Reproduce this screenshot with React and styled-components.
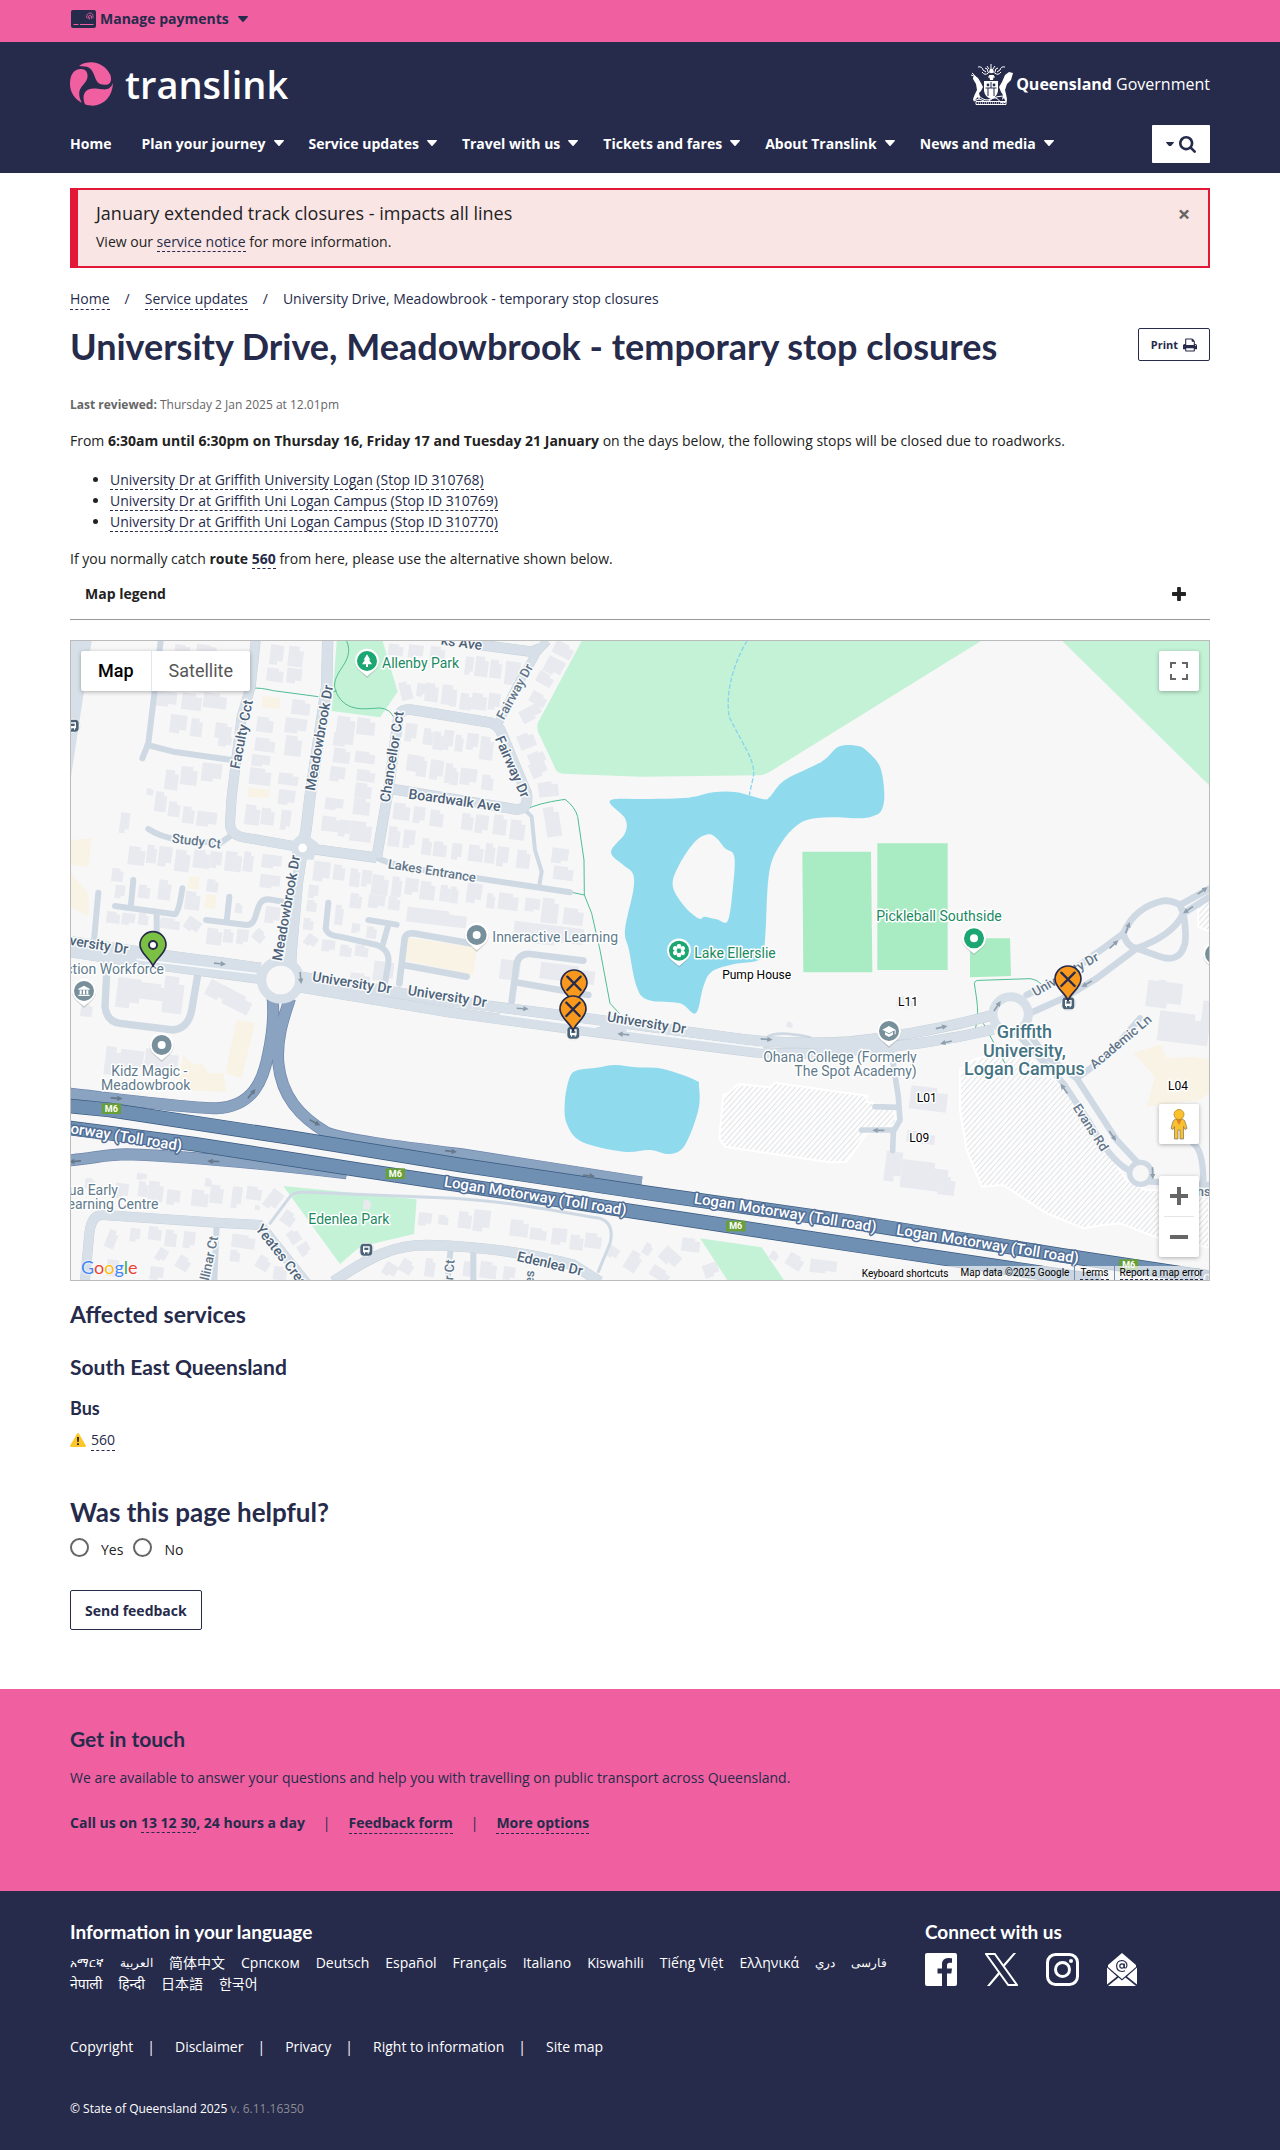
import React from "react";
import styled, { createGlobalStyle, css } from "styled-components";
import { FaXTwitter } from "react-icons/fa6";

const NAVY = "#262b4b";
const PINK = "#f060a1";

const GlobalStyle = createGlobalStyle`
  * { box-sizing: border-box; }
  body {
    margin: 0;
    background: #fff;
    color: #222;
    font-family: "Open Sans", "Noto Sans", "Noto Sans CJK SC", "Noto Sans CJK JP", "Noto Sans CJK KR", sans-serif;
    font-size: 14px;
    line-height: 21px;
  }
  h1, h2, h3, h4, p, ul { margin: 0; }
  button { font-family: inherit; cursor: pointer; }
`;

/* ---------- shared ---------- */

const Container = styled.div`
  width: 100%;
  max-width: 1180px;
  margin: 0 auto;
  padding: 0 20px;
`;

const Link = styled.a`
  color: ${NAVY};
  text-decoration: none;
  border-bottom: 1px dashed ${NAVY};
`;

const Heading = styled.h2`
  color: ${(p) => p.$color || NAVY};
  font-family: Lato, "Open Sans", sans-serif;
  font-weight: 700;
  font-size: ${(p) => p.$size}px;
  line-height: ${(p) => p.$line}px;
  margin-top: ${(p) => p.$top || 0}px;
`;

const Glyph = styled.svg`
  display: block;
  fill: currentColor;
  flex: none;
`;

const Caret = ({ size = 10 }) => (
  <Glyph width={size} height={size * 0.6} viewBox="0 0 10 6" aria-hidden="true">
    <path d="M.6 0h8.8q.9.2.4.9L5.6 5.7q-.6.5-1.2 0L.2.9Q-.2.2.6 0z" />
  </Glyph>
);

/* ---------- header ---------- */

const TopBar = styled.div`
  background: ${PINK};
`;

const TopBarButton = styled.button`
  display: flex;
  align-items: center;
  height: 42px;
  padding: 0 0 4px 1px;
  gap: 4px;
  border: 0;
  background: none;
  color: ${NAVY};
  font-size: 14px;
  font-weight: 700;
  line-height: 20px;
`;

const TopBarLabel = styled.span`
  margin-right: 5px;
`;

const Header = styled.header`
  background: ${NAVY};
  color: #fff;
  padding: 20px 0 10px;
`;

const BrandRow = styled.div`
  display: flex;
  justify-content: space-between;
  align-items: center;
  height: 44px;
`;

const Brand = styled.a`
  display: flex;
  align-items: center;
  gap: 12px;
  color: #fff;
  text-decoration: none;
`;

const BrandName = styled.span`
  font-family: "Open Sans", sans-serif;
  font-weight: 600;
  font-size: 38px;
  line-height: 44px;
`;

const Government = styled.a`
  display: flex;
  align-items: center;
  gap: 3px;
  color: #fff;
  text-decoration: none;
  font-family: "Open Sans", sans-serif;
  font-size: 16px;
  font-weight: 400;
  line-height: 24px;
  strong { font-weight: 700; }
`;

const NavRow = styled.div`
  display: flex;
  justify-content: space-between;
  align-items: center;
  margin-top: 19px;
`;

const Nav = styled.nav`
  display: flex;
  flex-wrap: wrap;
  column-gap: 25px;
  padding-bottom: 2px;
`;

const NavLink = styled.a`
  display: flex;
  align-items: center;
  gap: 8px;
  color: #fff;
  text-decoration: none;
  font-size: 14px;
  font-weight: 700;
  ${(p) => p.$plain && css`margin-right: 5px;`}
`;

const SearchButton = styled.button`
  display: flex;
  align-items: center;
  justify-content: center;
  gap: 5px;
  width: 58px;
  height: 38px;
  padding: 0;
  border: 0;
  border-radius: 1px;
  background: #fff;
  color: ${NAVY};
`;

const PaymentCard = () => (
  <Glyph width="25" height="18" viewBox="0 0 25 18" aria-hidden="true">
    <rect width="25" height="18" rx="2" fill={NAVY} />
    <path d="M2.500 14.500h5M9 14.500h13.500" stroke={PINK} strokeWidth="1" />
    <g fill="none" stroke={PINK} strokeWidth=".8">
      <path d="M15.500 8q0-5 3.500-5t3 5M17 9q0-4 2-4t1.800 4M18.500 9.500q0-3 .8-3" />
    </g>
  </Glyph>
);

const BrandMark = () => (
  <Glyph width="43" height="44" viewBox="0 0 43 44" aria-hidden="true">
    <g fill={PINK}>
      <path d="M9 4C13 1 17 .3 21 .3c9 0 16 5.500 19.500 13 1.200 4 .8 9.500-4.500 9.500-5.500 0-8-1-10-5C23.500 12 22.500 5 15 4.500c-2-.2-4-.3-6-.5z" />
      <path d="M10 7c5-.5 8 2.500 7.500 8C17 21 10 24 9.300 30c-.4 4 .6 7.500 2.600 10.800C4.500 37 0 30 0 22 0 14 3 7.500 10 7z" />
      <path d="M43 21c-2 5.500-6 7-11 6.300-5-.6-9-1.500-13 0-4.500 1.700-5.800 6-5.300 10 .2 2 .6 3.500 1.300 5 2.500 1 5 1.400 8 1.400C35 43 42.500 33.500 43 21z" />
    </g>
  </Glyph>
);

const CoatOfArms = () => (
  <Glyph width="43" height="42" viewBox="0 0 43 42" aria-hidden="true">
    <g fill="none" stroke="#fff" strokeWidth="1">
      <path d="M8 4q4-1 5 3l3 2M35 4q-4-1-5 3l-3 2M21 1v6M17 3l2 3M25 3l-2 3M12 9q3 4 6 1M31 9q-3 4-6 1M15 5q3 0 3 4M28 5q-3 0-3 4" />
      <path d="M17 11q4-5 9 0M18 14h7M5 37.500q4-3 8 0t8-1 8 1 8 0M9 33q6 6 12 3t12-3M6 38.500h30v3H6z" />
      <path d="M8 40h26" strokeDasharray="1 1" />
      <path d="M2 10q3 2 4 5M1 12l3 1M3 15l2-1" />
    </g>
    <path d="M14 18h14v10q-1 6-7 8-6-2-7-8z" />
    <path d="M15.500 25h11M21 19v6M18 25v8M24 25v8" stroke={NAVY} />
    <circle cx="18" cy="22" r="1.400" fill={NAVY} />
    <circle cx="24" cy="22" r="1.400" fill={NAVY} />
    <circle cx="21.500" cy="8" r="2.200" />
    <path d="M19 12h5l-1 5h-3z" />
    <path d="M4 12l4 3 3 5 2 4-2 4-2 2 1 4-1 3-1-3-2 2-2 3-1-3 2-5 2-4-1-6-3-5z" />
    <path d="M43 10l-4-1-4 3-3 7-3 5 2 5 2 3-1 5 2-2 2 5 1-4-1-5-1-4 2-6 4-4z" />
  </Glyph>
);

const SearchIcon = () => (
  <Glyph width="17" height="17" viewBox="64 128 1664 1664" aria-hidden="true">
    <path d="M1216 832q0-185-131.500-316.500t-316.500-131.500-316.500 131.500-131.500 316.500 131.500 316.500 316.500 131.500 316.500-131.500 131.500-316.500zm512 832q0 52-38 90t-90 38q-54 0-90-38l-343-342q-179 124-399 124-143 0-273.500-55.500t-225-150-150-225-55.500-273.500 55.500-273.500 150-225 225-150 273.500-55.500 273.500 55.500 225 150 150 225 55.500 273.500q0 220-124 399l343 343q37 37 37 90z" />
  </Glyph>
);

const MENU = ["Plan your journey", "Service updates", "Travel with us", "Tickets and fares", "About Translink", "News and media"];

const SiteHeader = () => (
  <>
    <TopBar>
      <Container>
        <TopBarButton type="button">
          <PaymentCard />
          <TopBarLabel>Manage payments</TopBarLabel>
          <Caret />
        </TopBarButton>
      </Container>
    </TopBar>
    <Header>
      <Container>
        <BrandRow>
          <Brand href="#home"><BrandMark /><BrandName>translink</BrandName></Brand>
          <Government href="#government">
            <CoatOfArms />
            <span><strong>Queensland</strong> Government</span>
          </Government>
        </BrandRow>
        <NavRow>
          <Nav aria-label="Main">
            <NavLink href="#home" $plain>Home</NavLink>
            {MENU.map((item) => (
              <NavLink href="#menu" key={item}>{item}<Caret /></NavLink>
            ))}
          </Nav>
          <SearchButton type="button" aria-label="Search"><Caret size={8} /><SearchIcon /></SearchButton>
        </NavRow>
      </Container>
    </Header>
  </>
);

/* ---------- page content ---------- */

const Alert = styled.section`
  display: flex;
  justify-content: space-between;
  align-items: flex-start;
  margin-top: 15px;
  padding: 11px 12px 14px 18px;
  border: 2px solid #e31837;
  border-left-width: 8px;
  background: #f9e5e4;
`;

const AlertTitle = styled.h2`
  font-size: 18px;
  font-weight: 400;
  line-height: 24px;
  margin-bottom: 6px;
`;

const CloseButton = styled.button`
  width: 24px;
  height: 24px;
  padding: 0;
  border: 0;
  background: none;
  color: #666;
  font-size: 22px;
  font-weight: 700;
  line-height: 24px;
`;

const Crumbs = styled.nav`
  display: flex;
  flex-wrap: wrap;
  column-gap: 15px;
  margin-top: 20px;
  color: ${NAVY};
`;

const TitleRow = styled.div`
  display: flex;
  justify-content: space-between;
  align-items: flex-start;
  margin-top: 15px;
`;

const OutlineButton = styled.button`
  display: flex;
  align-items: center;
  justify-content: center;
  gap: 5px;
  border: 1px solid ${NAVY};
  border-radius: 2px;
  background: #fff;
  color: ${NAVY};
  font-weight: 700;
  ${(p) => p.$small
    ? css`height: 33px; padding: 0 12px; margin-top: 3px; font-size: 11px;`
    : css`height: 40px; padding: 0 14px; margin-top: 29px; font-size: 14px;`}
`;

const Reviewed = styled.p`
  margin-top: 28px;
  color: #666;
  font-size: 12px;
  line-height: 18px;
`;

const Paragraph = styled.p`
  margin-top: 16px;
`;

const StopList = styled.ul`
  margin-top: 18px;
  padding-left: 40px;
`;

const Legend = styled.button`
  display: flex;
  justify-content: space-between;
  align-items: center;
  width: 100%;
  padding: 14px 24px 15px 15px;
  border: 0;
  border-bottom: 1px solid #999;
  background: none;
  color: #222;
  font-size: 14px;
  font-weight: 700;
  line-height: 21px;
`;

const PrintIcon = () => (
  <Glyph width="14" height="14" viewBox="64 64 1664 1664" aria-hidden="true">
    <path d="M448 1536h896v-256h-896v256zm0-640h896v-384h-160q-40 0-68-28t-28-68v-160h-640v640zm1152 64q0-26-19-45t-45-19-45 19-19 45 19 45 45 19 45-19 19-45zm128 0v416q0 13-9.500 22.500t-22.500 9.500h-224v160q0 40-28 68t-68 28h-960q-40 0-68-28t-28-68v-160h-224q-13 0-22.500-9.500t-9.500-22.500v-416q0-79 56.500-135.500t135.500-56.500h64v-544q0-40 28-68t68-28h672q40 0 88 20t76 48l152 152q28 28 48 76t20 88v256h64q79 0 135.500 56.500t56.500 135.500z" />
  </Glyph>
);

const PlusIcon = () => (
  <Glyph width="14" height="14" viewBox="192 128 1408 1408" aria-hidden="true">
    <path d="M1600 736v192q0 40-28 68t-68 28h-416v416q0 40-28 68t-68 28h-192q-40 0-68-28t-28-68v-416h-416q-40 0-68-28t-28-68v-192q0-40 28-68t68-28h416v-416q0-40 28-68t68-28h192q40 0 68 28t28 68v416h416q40 0 68 28t28 68z" />
  </Glyph>
);

/* ---------- map ---------- */

const MapFrame = styled.div`
  position: relative;
  height: 641px;
  margin-top: 20px;
  border: 1px solid #bbb;
  overflow: hidden;
  background: #f7f7f7;
  font-family: Roboto, sans-serif;
`;

const MapCanvas = styled.svg`
  display: block;
  width: 100%;
  height: 100%;
`;

const MapLabel = styled.text`
  font-family: Roboto, sans-serif;
  font-size: ${(p) => p.$size}px;
  font-weight: ${(p) => p.$weight};
  fill: ${(p) => p.$color};
  stroke: ${(p) => p.$halo};
  stroke-width: 3px;
  stroke-linejoin: round;
  paint-order: stroke;
  text-anchor: ${(p) => p.$anchor};
  dominant-baseline: central;
`;

const floating = css`
  position: absolute;
  display: flex;
  border-radius: 2px;
  background: #fff;
  box-shadow: 0 1px 4px rgba(0, 0, 0, 0.3);
`;

const MapTypes = styled.div`
  ${floating}
  top: 10px;
  left: 10px;
`;

const MapTypeButton = styled.button`
  height: 40px;
  padding: 0 17px 2px;
  border: 0;
  background: none;
  font-size: 18px;
  color: ${(p) => (p.$on ? "#000" : "#565656")};
  font-weight: ${(p) => (p.$on ? 500 : 400)};
  & + & { border-left: 1px solid #e6e6e6; }
`;

const TopRight = styled.div`
  ${floating}
  top: 10px;
  right: 10px;
`;

const PegmanBox = styled.div`
  ${floating}
  right: 10px;
  bottom: 136px;
`;

const ZoomBox = styled.div`
  ${floating}
  flex-direction: column;
  align-items: center;
  right: 10px;
  bottom: 23px;
`;

const ZoomDivider = styled.span`
  width: 30px;
  height: 1px;
  background: #e6e6e6;
`;

const MapButton = styled.button`
  display: flex;
  align-items: center;
  justify-content: center;
  width: 40px;
  height: 40px;
  padding: 0;
  border: 0;
  background: none;
  color: #666;
`;

const Attribution = styled.div`
  position: absolute;
  right: 0;
  bottom: 0;
  display: flex;
  height: 14px;
  padding: 0 6px;
  background: rgba(245, 245, 245, 0.7);
  color: #000;
  font-size: 10px;
  line-height: 13px;
`;

const AttributionItem = styled.span`
  padding: 0 5px;
  border-left: 1px solid ${(p) => (p.$line ? "#6f90b2" : "transparent")};
  &:last-child { padding-right: 0; }
  a {
    display: block;
    color: #000;
    text-decoration: none;
    border-bottom: 1px dashed ${NAVY};
  }
`;

const ShortcutButton = styled.button`
  padding: 0 6px;
  border: 0;
  background: none;
  color: #000;
  font-size: 10px;
  line-height: 13px;
`;

const GoogleMark = styled.a`
  position: absolute;
  left: 10px;
  bottom: 1px;
  font-family: Lato, sans-serif;
  font-size: 18px;
  line-height: 24px;
  text-decoration: none;
  text-shadow: 0 0 2px #fff, 0 0 2px #fff;
`;

const Letter = styled.span`
  color: ${(p) => p.$c};
`;

/* closed or open curve running through every point */
const curve = (pts, closed = true) => {
  const n = pts.length;
  const at = (i) => (closed ? pts[(i + n) % n] : pts[Math.max(0, Math.min(n - 1, i))]);
  let d = `M${pts[0]}`;
  for (let i = 0; i < (closed ? n : n - 1); i++) {
    const [a, b, c, e] = [at(i - 1), at(i), at(i + 1), at(i + 2)];
    d += `C${b[0] + (c[0] - a[0]) / 6},${b[1] + (c[1] - a[1]) / 6} ${c[0] - (e[0] - b[0]) / 6},${c[1] - (e[1] - b[1]) / 6} ${c}`;
  }
  return closed ? d + "Z" : d;
};

const LAKE = [[1650, 512], [1760, 507], [1885, 503], [1960, 487], [2030, 487], [2108, 507], [2130, 500], [2175, 450], [2285, 395], [2335, 350], [2390, 347], [2420, 362], [2460, 410], [2473, 490], [2465, 540], [2440, 558], [2400, 565], [2310, 562], [2240, 570], [2195, 600], [2160, 645], [2135, 695], [2123, 770], [2115, 930], [2100, 988], [2020, 1003], [1955, 1025], [1930, 1070], [1907, 1150], [1860, 1120], [1765, 1110], [1730, 1070], [1707, 960], [1695, 900], [1720, 780], [1718, 730], [1690, 705], [1653, 665], [1695, 610], [1695, 565]];
const ISLAND = [[1945, 613], [1970, 625], [1995, 655], [2023, 680], [2018, 780], [2003, 873], [1970, 868], [1935, 860], [1915, 865], [1870, 825], [1838, 765], [1860, 700], [1905, 635]];
const POND = [[1555, 1320], [1610, 1313], [1665, 1305], [1730, 1312], [1810, 1317], [1905, 1350], [1917, 1370], [1915, 1440], [1875, 1545], [1830, 1572], [1770, 1560], [1690, 1565], [1565, 1535], [1520, 1480], [1515, 1410], [1530, 1340]];

/* houses, grouped by map tile: x, y, width, height, turn */
const HOUSES = [
  [0, 0, [[630,45,40,60],[685,50,45,60],[620,115,50,40],[680,115,45,45],[345,45,45,20],[410,45,60,20],[290,185,60,45],[365,190,60,50],[430,190,70,45],[330,255,50,55],[392,265,35,55],[465,280,50,45],[475,320,40,30],[695,210,55,45],[590,262,50,45],[675,265,65,45],[585,325,60,40],[675,318,50,60],[575,375,55,35],[568,415,65,50],[655,430,60,35],[655,480,50,45],[555,525,45,60],[603,535,40,50],[662,540,30,60],[315,420,40,60],[362,410,50,55],[425,400,60,55],[260,475,20,20],[285,485,35,60],[180,548,28,62],[325,515,35,45],[368,530,35,50],[410,545,60,45],[205,650,50,55],[260,645,30,55],[295,650,40,60],[345,660,45,65],[400,660,50,55],[450,665,35,50],[495,665,50,60],[550,665,30,60],[605,675,60,40],[155,715,35,40],[235,765,35,40],[165,765,30,40],[295,750,38,60],[440,748,35,38],[600,735,60,40],[375,785,45,55],[140,845,40,35],[185,850,40,35],[235,850,30,35],[300,865,60,32],[375,865,45,40,28],[440,895,45,50],[490,898,30,40],[530,898,35,45],[580,900,35,35,35],[525,820,22,30],[615,830,45,50],[830,260,55,55],[890,265,55,50],[820,310,60,40],[820,355,50,45],[885,365,60,35],[810,410,45,45],[890,420,55,35],[885,460,50,45],[795,505,55,35],[785,560,60,45],[880,505,50,50],[835,570,35,50],[870,575,65,60],[985,42,45,35],[1045,45,45,40],[1110,50,45,45],[1020,155,35,55,-20],[1070,160,30,40],[1095,160,40,55],[1145,165,45,60],[1035,280,35,55],[1090,295,30,50],[1120,305,30,55],[1150,300,30,60],[1040,375,50,50],[1070,380,30,60],[1110,390,40,60],[1155,400,30,60],[1000,520,50,50],[1060,530,35,50],[1110,540,40,50],[985,590,35,60],[1030,600,35,55],[1085,625,30,50],[1120,635,40,45],[760,695,50,60],[820,705,35,45],[870,715,30,55],[905,720,30,50],[935,735,50,60],[995,740,30,60],[1035,745,40,50],[1080,755,45,55],[1140,765,30,50],[745,765,30,40],[740,810,30,35],[730,865,30,35],[735,915,35,35,30],[825,825,25,60],[870,790,35,45],[925,795,50,40],[985,800,35,40],[1040,840,180,45],[785,930,40,35],[840,945,35,35],[885,945,40,35],[875,880,25,30],[920,890,30,35]]],
  [1170, 0, [[45,80,25,55],[75,80,40,60],[120,90,35,55],[165,95,45,70],[30,190,35,50],[65,190,45,50],[115,190,35,50],[0,185,20,45],[310,40,60,40,20],[285,85,55,50,20],[260,130,50,35,22],[240,190,50,35,22],[210,230,65,40,-35],[205,310,50,45,-28],[235,365,50,35,-30],[240,395,50,45,-30],[265,455,60,45,-14],[285,530,45,90,-16],[305,655,50,45],[310,710,60,40],[15,315,25,50],[50,310,35,50],[90,320,40,70],[0,415,25,50],[30,415,50,50],[95,435,35,45],[35,550,35,50],[75,555,40,55],[130,555,40,60],[180,570,45,60],[5,640,30,50],[55,645,45,50],[105,640,30,60],[140,650,35,60],[200,660,40,55],[0,770,25,50],[50,760,45,60],[110,790,25,45],[145,790,60,50],[225,805,45,40],[275,805,50,75],[340,835,60,50],[190,885,210,60]]],
  [0, 960, [[170,85,70,90],[210,100,130,50],[310,80,60,110],[440,100,70,50,20],[490,130,85,50,20],[135,290,45,85],[180,300,70,60],[255,300,100,55],[62,160,35,40],[230,670,30,20],[435,685,20,25],[75,685,30,30],[165,700,40,45],[235,695,30,45],[265,695,45,60],[320,720,40,45],[395,720,50,50],[450,705,40,55],[515,710,30,65],[560,710,45,40],[585,765,15,15],[620,720,40,60,30],[665,785,40,40,30],[685,840,35,40,-40],[715,880,35,35,-40],[910,750,22,28],[140,840,30,55,15],[210,835,30,40],[265,830,40,40],[315,840,35,50],[370,845,35,50],[515,855,70,40],[510,900,30,35],[290,895,30,40,25],[350,920,40,40,25],[140,930,50,50],[270,950,40,40],[590,920,40,40,25],[640,950,40,40],[1075,788,40,40],[1135,795,30,30],[1095,925,30,55],[970,940,40,40,25],[1020,930,40,40,25],[870,70,60,35],[940,35,60,60]]],
  [1170, 960, [[150,30,60,60],[270,45,165,50],[25,785,40,50],[70,780,50,65],[180,810,55,50],[240,835,50,35],[305,835,45,50],[360,855,40,45],[405,850,50,45],[470,890,35,35,25],[530,905,40,60,25],[580,880,25,35,25],[630,900,60,45,35],[695,865,55,40],[600,955,60,35,25],[760,940,45,40,-26],[960,905,25,25,25],[1010,915,50,40,25],[1080,930,80,40],[40,935,35,45],[90,935,50,50],[160,950,35,40],[1010,215,18,18]]],
  [2310, 960, [[200,140,60,35],[240,412,112,70],[230,545,85,35],[165,605,50,90],[213,635,140,85],[325,680,50,55],[950,95,105,80],[985,90,30,40],[985,190,152,90],[1115,155,60,90]]],
];

/* curved residential streets: path, width */
const STREETS = [
  ["M587 33L572 170 545 260 515 500 510 580Q510 615 550 622L728 653", 28],
  ["M803 33L800 170 750 500 738 600 728 653 712 760 694 960 690 1040", 32],
  ["M728 653L950 683", 30],
  ["M950 683L985 480 1015 265Q1020 232 1060 240L1280 276Q1315 280 1325 310L1400 490Q1408 545 1360 537L1000 478", 30],
  ["M1315 280L1370 170 1420 85 1430 65 1462 33", 24],
  ["M1240 42L1415 65 1440 55", 30],
  ["M75 1950L88 1810Q95 1752 130 1755L470 1778 600 1785 740 1960", 28],
  ["M820 1955C930 1880 1000 1845 1100 1845C1300 1850 1450 1880 1540 1905L1620 1955", 30],
];

const LANES = [
  ["M302 33L265 340 247 385M262 345L340 365 515 390", 18],
  ["M265 597Q300 620 350 628L480 640 515 615", 18],
  ["M165 828L345 853Q357 845 367 775M212 835L220 750M290 855V915M115 788L102 930", 18],
  ["M438 870L560 885C600 885 580 805 625 808L670 815M500 875L508 800", 18],
  ["M805 818L797 895Q800 915 840 920L950 945Q990 960 985 1000L975 1060M925 870L1010 884M985 885L968 945", 18],
  ["M1018 1060L1034 925Q1038 908 1060 910L1230 940M1030 1005L1220 1040", 20],
  ["M1355 1115L1370 1000Q1378 970 1410 972L1570 992M1375 1058L1585 1095", 20],
  ["M950 683Q1000 710 1170 732L1530 787", 18],
  ["M1395 540L1415 560 1425 660 1445 725 1438 765", 12],
  ["M142 990L135 1130Q140 1175 180 1180L340 1200Q385 1195 395 1140L415 1025", 22],
  ["M470 1785L463 1950M1172 1855L1163 1950M1240 1870V1950", 18],
  ["M630 1780L690 1700Q700 1685 740 1687L1180 1705C1350 1715 1500 1745 1620 1765Q1665 1780 1650 1840L1615 1925", 9],
  ["M2120 1222Q2150 1200 2250 1222", 8],
  ["M2495 1270L2515 1400 2520 1470 2500 1505 2498 1562M2445 1430L2515 1432M2405 1500L2500 1500", 17],
  ["M2900 1095L3010 1040 3130 955 3190 910Q3225 830 3310 812Q3340 812 3360 825L3450 775M3190 910Q3200 950 3230 955Q3340 915 3370 850L3360 825M3370 850L3450 800M3370 850Q3380 900 3375 940Q3360 1000 3300 980L3230 955", 20],
  ["M2910 1150L3010 1105 3110 1045 3210 970 3230 955", 20],
  ["M2870 1210L3010 1360 3090 1480Q3150 1590 3205 1620M2905 1210L2960 1280 3050 1345 3170 1530 3235 1600M3050 1345L3140 1280 3240 1165M3270 1655L3450 1665M3400 1540Q3430 1560 3430 1660", 19],
];

const Arrow = ({ x, y, r = 0, c = "#8f9fae" }) => (
  <path d="M-18-2.500H2V-8L18 0 2 8V2.500H-18z" fill={c} transform={`translate(${x} ${y}) rotate(${r})`} />
);

const Pin = ({ x, y, color = "#78909c", kind }) => (
  <g transform={`translate(${x} ${y})`}>
    <path d="M0 48L-22 28A36 36 0 1 1 22 28z" fill="#888" opacity=".35" transform="translate(0 3)" />
    <path d="M0 46L-22 28A36 36 0 1 1 22 28z" fill="#fff" />
    <circle r="30" fill={color} />
    {kind === "dot" && <circle r="12" fill="#fff" />}
    {kind === "tree" && <path d="M0-20L10-4H6L15 10H3V18H-3V10H-15L-6-4H-10z" fill="#fff" />}
    {kind === "flower" && <g fill="#fff">{[0, 60, 120, 180, 240, 300].map((a) => <circle key={a} cx="0" cy="-13" r="7" transform={`rotate(${a})`} />)}</g>}
    {kind === "cap" && <path d="M0-15L20-4 0 7-20-4zM-12 3L0 10 12 3V11L0 18-12 11zM17-3h3v13h-3z" fill="#fff" />}
    {kind === "hall" && <path d="M0-16L17-7V-4H-17V-7zM-13-2h6v12h-6zM-3-2h6v12h-6zM7-2h6v12H7zM-17 11h34v4h-34z" fill="#fff" />}
  </g>
);

const BusStop = ({ x, y }) => (
  <g transform={`translate(${x} ${y})`}>
    <circle r="22" fill="#fff" stroke="#bcc4cc" />
    <rect x="-18" y="-18" width="36" height="36" rx="11" fill="#4a6378" />
    <path d="M-10-10H10V8H7v4H4V8H-4v4h-3V8h-3z" fill="#fff" />
    <path d="M-6-6H6V1H-6z" fill="#4a6378" />
  </g>
);

const Marker = ({ x, y, stop }) => (
  <g transform={`translate(${x} ${y})`} stroke={NAVY} strokeWidth="5" strokeLinejoin="round">
    <path d="M0 64C-6 42-39 26-39-1A39 39 0 0 1 39-1C39 26 6 42 0 64z" fill={stop ? "#f8981d" : "#7ac143"} />
    {stop
      ? <path d="M-20-20L20 20M20-20L-20 20" strokeWidth="7" strokeLinecap="round" />
      : <circle r="12" fill="#fff" strokeWidth="6" />}
  </g>
);

const Shield = ({ x, y }) => (
  <rect x={x - 29} y={y - 16} width="58" height="32" fill="#689f38" />
);

const SLATE = "#4d6279";
const POI = "#5f7b8c";
const GREEN = "#1b8a62";
/* text, x, y, turn, style */
const LABELS = [
  ["Faculty Cct", 544, 313, -79, "street"],
  ["Meadowbrook Dr", 777, 323, -80, "street"],
  ["Meadowbrook Dr", 678, 834, -80, "street"],
  ["Chancellor Cct", 995, 380, -81, "street"],
  ["Boardwalk Ave", 1184, 510, 8, "street"],
  ["Study Ct", 409, 633, 7, "lane"],
  ["Lakes Entrance", 1116, 722, 9, "lane"],
  ["Fairway Dr", 1364, 185, -61, "lane"],
  ["Fairway Dr", 1358, 410, 66, "street"],
  ["ks Ave", 1205, 37, 8, "street"],
  ["niversity Dr", 100, 941, 9, "street"],
  ["University Dr", 876, 1057, 9, "street"],
  ["University Dr", 1162, 1098, 9, "street"],
  ["University Dr", 1760, 1178, 9, "street"],
  ["University Dr", 3016, 1033, -30, "lane"],
  ["Academic Ln", 3182, 1235, -40, "lane"],
  ["Evans Rd", 3092, 1492, 57, "lane"],
  ["Edenlea Dr", 1470, 1900, 13, "street"],
  ["Yeates Cres", 666, 1876, 52, "street"],
  ["ellinar Ct", 445, 1895, -78, "lane"],
  ["ar Ct", 1167, 1930, -85, "lane"],
  ["es", 1408, 1942, -85, "lane"],
  ["Evans", 3400, 1684, 0, "lane"],
  ["Logan Motorway (Toll road)", 1426, 1698, 9, "motorway"],
  ["Logan Motorway (Toll road)", 2176, 1748, 9, "motorway"],
  ["Logan Motorway (Toll road)", 2783, 1842, 9, "motorway"],
  ["Motorway (Toll road)", 160, 1515, 9, "motorway"],
  ["Lo", 3430, 1938, 9, "motorway"],
  ["M6", 154, 1437, 0, "shield"],
  ["M6", 1006, 1632, 0, "shield"],
  ["M6", 2027, 1789, 0, "shield"],
  ["M6", 3206, 1905, 0, "shield"],
  ["Allenby Park", 966, 99, 0, "park"],
  ["Lake Ellerslie", 1903, 970, 0, "park"],
  ["Edenlea Park", 745, 1768, 0, "park"],
  ["Pickleball Southside", 2637, 859, 0, "park"],
  ["Inneractive Learning", 1297, 922, 0, "poi"],
  ["action Workforce", 312, 1017, 0, "poi", "end"],
  ["Kidz Magic -", 268, 1324, 0, "poi", "middle"],
  ["Meadowbrook", 257, 1366, 0, "poi", "middle"],
  ["qua Early", 174, 1681, 0, "poi", "end"],
  ["Learning Centre", 295, 1723, 0, "poi", "end"],
  ["Ohana College (Formerly", 2570, 1282, 0, "poi", "end"],
  ["The Spot Academy)", 2570, 1324, 0, "poi", "end"],
  ["Griffith", 2893, 1205, 0, "campus"],
  ["University,", 2893, 1260, 0, "campus"],
  ["Logan Campus", 2893, 1315, 0, "campus"],
  ["Pump House", 2090, 1036, 0, "block"],
  ["L11", 2544, 1116, 0, "block"],
  ["L01", 2600, 1404, 0, "block"],
  ["L09", 2578, 1524, 0, "block"],
  ["L04", 3354, 1368, 0, "block"],
];
const CENTRED_PARK = "Pickleball Southside";
const LABEL_STYLES = {
  street: { size: 14, weight: 500, color: SLATE, halo: "#f8fafb", anchor: "middle" },
  lane: { size: 13, weight: 500, color: "#627589", halo: "#f8fafb", anchor: "middle" },
  motorway: { size: 15, weight: 500, color: "#fff", halo: "#4f6d97", anchor: "middle" },
  shield: { size: 9, weight: 700, color: "#fff", halo: "none", anchor: "middle" },
  park: { size: 14, weight: 400, color: GREEN, halo: "#fff", anchor: "start" },
  poi: { size: 14, weight: 400, color: POI, halo: "#fff", anchor: "start" },
  campus: { size: 18, weight: 500, color: "#457484", halo: "#fff", anchor: "middle" },
  block: { size: 12, weight: 400, color: "#000", halo: "#fff", anchor: "middle" },
};

const DARK_NORTH = "M20 1427L150 1440 700 1524 1200 1605 1770 1690 2370 1775 3000 1875 3460 1945";
const DARK_SOUTH = "M20 1493L400 1542 900 1620 1200 1665 1770 1752 2370 1843 2900 1922 3120 1955";
const RAMPS = "M20 1390C200 1410 380 1435 470 1435C580 1430 610 1350 625 1270C640 1200 642 1150 638 1105M690 1105C665 1180 650 1230 655 1300C665 1400 720 1460 800 1508C860 1530 1000 1548 1200 1572L1745 1657M20 1592C100 1585 140 1573 200 1573C400 1580 650 1605 860 1630";
const UNI_DR = "M20 948C250 985 420 1005 600 1030";
const UNI_EAST = "M720 1040L1170 1113 1600 1168 2050 1228Q2200 1245 2370 1235Q2600 1210 2800 1155M720 1072L1170 1147 1600 1205 2050 1262Q2200 1280 2370 1262Q2600 1245 2800 1198";

const MapDrawing = () => (
  <MapCanvas viewBox="0 0 1138 639" preserveAspectRatio="xMidYMid slice" role="img" aria-label="Map of stop closures on University Drive, Meadowbrook">
    <defs>
      <pattern id="carpark" width="12" height="12" patternUnits="userSpaceOnUse" patternTransform="rotate(42)">
        <rect width="12" height="12" fill="#fdfdfd" />
        <rect width="2" height="12" fill="#d3d7db" />
      </pattern>
    </defs>
    <g transform="scale(.33333) translate(-33 -33)">
      <g fill="#c4f2d6">
        <path d="M830 33H968L1013 185 960 262 815 243z" />
        <path d="M1565 33L1433 280Q1430 298 1436 310L1488 420Q1495 430 1510 431L1740 440 2100 436Q2115 434 2130 425L2763 33z" />
        <path d="M3007 33L3447 465V33z" />
        <path d="M670 1668L1070 1708 1062 1812 900 1850 840 1902z" />
        <path d="M1920 1825L2105 1852 2175 1955H2005z" />
      </g>
      <path d="M2227 665H2433L2437 1027H2230zM2452 640H2663V1020H2452zM2730 925H2850L2853 1038 2730 1042z" fill="#a9ebc3" />
      <g fill="#f9f3e6">
        <path d="M33 630L95 625 85 710 33 705zM33 730L85 790 85 860 33 830zM608 197L662 205 658 238 604 230zM565 472L630 480 625 505 562 500zM390 738L420 742 415 780 382 775zM440 792L470 797 465 838 433 832z" />
        <path d="M530 1170L585 1180 545 1345 497 1330 515 1240zM370 1275L400 1305 425 1300 445 1330 490 1330 500 1385 385 1382 355 1360z" />
        <path d="M1038 922L1250 952 1240 1035 1030 990zM3220 1270L3300 1243 3320 1285 3400 1280 3447 1290V1390L3420 1410 3260 1430 3285 1340z" />
      </g>
      {HOUSES.map(([ox, oy, list]) => (
        <g key={`${ox}-${oy}`} fill="#e8eaef" transform={`translate(${ox} ${oy})`}>
          {list.map(([x, y, w, h, r = 0], i) => (
            <path
              key={i}
              d={i % 3 ? `M${x} ${y}h${w * 0.7}v${h * 0.2}h${w * 0.3}v${h * 0.8}h${-w}z` : `M${x} ${y}h${w}v${h * 0.8}h${-w * 0.4}v${h * 0.2}h${-w * 0.6}z`}
              transform={`rotate(${7 + r} ${x + w / 2} ${y + h / 2})`}
            />
          ))}
        </g>
      ))}
      <g fill="url(#carpark)" stroke="#fff" strokeWidth="6" strokeLinejoin="round">
        <path d="M1990 1395L2005 1390 2035 1362 2130 1372 2145 1358 2420 1397 2420 1415 2500 1430 2510 1480 2420 1510 2360 1595 2310 1597 1995 1550 1978 1525z" />
        <path d="M2700 1320L2740 1290 2870 1250 3010 1370 3160 1590 3200 1650 3260 1680 3447 1680V1852L3310 1830 3180 1780 3130 1785 3070 1795 2960 1750 2830 1665 2765 1670 2720 1560 2700 1440z" />
        <path d="M3415 820L3450 800V905L3415 890z" />
      </g>
      <path d={curve(LAKE)} fill="#90daee" />
      <path d={curve(ISLAND)} fill="#f7f7f7" />
      <path d={curve(POND)} fill="#90daee" />
      <path d="M2061 33C2020 100 1995 190 2008 262L2065 370Q2085 410 2080 440L2068 495" fill="none" stroke="#87d5ee" strokeWidth="4" strokeDasharray="14 6" />
      <g fill="none" stroke="#4fbd94" strokeWidth="3">
        <path d="M860 33C890 100 800 130 830 190C860 250 920 235 960 234Q990 237 1000 260M575 175Q600 172 640 182L775 200M820 185L830 182" />
        <path d="M1395 540Q1430 520 1515 508Q1545 530 1553 560L1572 690 1573 795 1595 850 1620 960 1650 1120 1678 1150M1535 787L1573 795" />
        <path d="M2745 1200C2760 1150 2750 1110 2743 1060Q2745 1050 2760 1051L2910 1046Q2935 1050 2945 1065M2770 1180L2835 1300" />
      </g>

      <path d="M33 33H95L33 440z" fill="#d7e0e8" />
      <g fill="none" strokeLinecap="round" strokeLinejoin="round" stroke="#cfd9e4">
        {LANES.map(([d, w]) => <path key={d} d={d} strokeWidth={w} />)}
      </g>
      <g fill="none" strokeLinejoin="round">
        {STREETS.map(([d, w]) => <path key={d} d={d} stroke="#c3ced8" strokeWidth={w + 2} />)}
        <path d={UNI_DR} stroke="#c3ced8" strokeWidth="64" />
        <path d={UNI_EAST} stroke="#c3ced8" strokeWidth="32" />
        {STREETS.map(([d, w]) => <path key={d} d={d} stroke="#d7e0e8" strokeWidth={w} />)}
        <path d={UNI_DR} stroke="#d7e0e8" strokeWidth="62" />
        <path d={UNI_EAST} stroke="#d7e0e8" strokeWidth="30" />
        <path d="M720 1056L1280 1138" stroke="#d7e0e8" strokeWidth="10" />
        <path d="M1620 1188L1700 1200" stroke="#d7e0e8" strokeWidth="36" />
        <path d="M230 988L590 1031M1320 1152L1610 1192M1700 1203L2110 1254" stroke="#f7f9fb" strokeWidth="5" />
      </g>
      <path d="M728 605L775 640 760 690 700 685 690 640z" fill="#d7e0e8" />
      <circle cx="728" cy="654" r="14" fill="#fff" stroke="#c3ced8" />

      <g fill="none" strokeLinejoin="round">
        <path d={RAMPS} stroke="#6f85ac" strokeWidth="36" />
        <path d={RAMPS} stroke="#8aa3c0" strokeWidth="32" />
        <path d={DARK_NORTH} stroke="#38587f" strokeWidth="44" />
        <path d={DARK_NORTH} stroke="#6f90b2" strokeWidth="40" />
        <path d={DARK_SOUTH} stroke="#38587f" strokeWidth="44" />
        <path d={DARK_SOUTH} stroke="#6f90b2" strokeWidth="40" />
      </g>

      <g fill="#f7f7f7" stroke="#d7e0e8">
        <circle cx="662" cy="1050" r="57" strokeWidth="28" />
        <circle cx="2852" cy="1153" r="53" strokeWidth="27" />
        <circle cx="3242" cy="1630" r="33" strokeWidth="16" stroke="#cfd9e4" />
      </g>

      <Arrow x={480} y={1001} r={5} />
      <Arrow x={722} y={1044} r={85} />
      <Arrow x={1388} y={1136} r={4} />
      <Arrow x={1690} y={1213} r={185} />
      <Arrow x={2120} y={1228} r={4} />
      <Arrow x={2645} y={1192} r={-13} />
      <Arrow x={2658} y={1237} r={167} />
      <Arrow x={2812} y={1128} r={-55} />
      <Arrow x={3080} y={1062} r={150} />
      <Arrow x={3162} y={943} r={-42} />
      <Arrow x={3203} y={893} r={-70} />
      <Arrow x={3428} y={782} r={-35} />
      <Arrow x={3384} y={840} r={145} />
      <Arrow x={3012} y={1376} r={-125} />
      <Arrow x={3158} y={1518} r={55} />
      <Arrow x={3278} y={1630} r={88} />
      <Arrow x={2455} y={1501} r={180} />
      {[[170, 1405, 4], [575, 1391, -50], [765, 1478, 28], [460, 1594, 182], [45, 1594, 175], [1173, 1564, 6], [1587, 1637, 6]].map(([x, y, r]) => (
        <Arrow key={x} x={x} y={y} r={r} c="#66788a" />
      ))}
      <Shield x={154} y={1436} />
      <Shield x={1006} y={1631} />
      <Shield x={2027} y={1788} />
      <Shield x={3206} y={1904} />
    </g>

    {LABELS.map(([text, x, y, turn, kind, anchor]) => {
      const s = LABEL_STYLES[kind];
      return (
        <MapLabel
          key={`${text}${x}`}
          transform={`translate(${(x - 33) / 3} ${(y - 33) / 3}) rotate(${turn})`}
          $size={s.size} $weight={s.weight} $color={s.color} $halo={s.halo}
          $anchor={text === CENTRED_PARK ? "middle" : anchor || s.anchor}
        >
          {text}
        </MapLabel>
      );
    })}

    <g transform="scale(.33333) translate(-33 -33)">
      <Pin x={921} y={93} color="#1ba672" kind="tree" />
      <Pin x={1250} y={915} kind="dot" />
      <Pin x={1857} y={962} color="#1ba672" kind="flower" />
      <Pin x={2742} y={925} color="#1ba672" kind="dot" />
      <Pin x={2487} y={1203} kind="cap" />
      <Pin x={72} y={1083} kind="hall" />
      <Pin x={365 - 60} y={1245} kind="dot" />
      <Pin x={3465} y={972} kind="dot" />
      <BusStop x={38} y={287} />
      <BusStop x={919} y={1859} />
      <BusStop x={1540} y={1208} />
      <BusStop x={3025} y={1120} />
      <Marker x={279} y={945} />
      <Marker x={1542} y={1060} stop />
      <Marker x={1539} y={1138} stop />
      <Marker x={3024} y={1048} stop />
    </g>
  </MapCanvas>
);

const Pegman = () => (
  <svg width="18" height="32" viewBox="0 0 18 32" aria-hidden="true">
    <path d="M5.500 11h7q2.500 1 3 4l1.500 5.500-2 1-1.500-3V31h-3.500v-9h-2v9H4.500V18.500L3 21.500l-2-1L2.500 15q.5-3 3-4z" fill="#fbc02d" stroke="#77735f" strokeWidth=".7" />
    <path d="M6 11h6l-3 6z" fill="#e0812a" />
    <circle cx="9" cy="6.500" r="5" fill="#fbc02d" stroke="#b58b1e" strokeWidth=".8" />
  </svg>
);

const GOOGLE = [["G", "#4285f4"], ["o", "#ea4335"], ["o", "#fbbc04"], ["g", "#4285f4"], ["l", "#34a853"], ["e", "#ea4335"]];

const ClosureMap = () => (
  <MapFrame>
    <MapDrawing />
    <MapTypes>
      <MapTypeButton type="button" $on>Map</MapTypeButton>
      <MapTypeButton type="button">Satellite</MapTypeButton>
    </MapTypes>
    <TopRight>
      <MapButton type="button" aria-label="Toggle fullscreen view">
        <Glyph width="18" height="18" viewBox="0 0 18 18"><path d="M0 0v6h2V2h4V0zM12 0v2h4v4h2V0zM16 16h-4v2h6v-6h-2zM2 12H0v6h6v-2H2z" /></Glyph>
      </MapButton>
    </TopRight>
    <PegmanBox>
      <MapButton type="button" aria-label="Open Street View"><Pegman /></MapButton>
    </PegmanBox>
    <ZoomBox>
      <MapButton type="button" aria-label="Zoom in">
        <Glyph width="18" height="18" viewBox="0 0 18 18"><path d="M7 0h4v7h7v4h-7v7H7v-7H0V7h7z" /></Glyph>
      </MapButton>
      <ZoomDivider />
      <MapButton type="button" aria-label="Zoom out">
        <Glyph width="18" height="18" viewBox="0 0 18 18"><path d="M0 7h18v4H0z" /></Glyph>
      </MapButton>
    </ZoomBox>
    <GoogleMark href="#google" aria-label="Google">
      {GOOGLE.map(([ch, c], i) => <Letter key={i} $c={c}>{ch}</Letter>)}
    </GoogleMark>
    <Attribution>
      <ShortcutButton type="button">Keyboard shortcuts</ShortcutButton>
      <AttributionItem>Map data ©2025 Google</AttributionItem>
      <AttributionItem $line><a href="#terms">Terms</a></AttributionItem>
      <AttributionItem $line><a href="#report">Report a map error</a></AttributionItem>
    </Attribution>
  </MapFrame>
);

/* ---------- services and feedback ---------- */

const Service = styled.p`
  display: flex;
  align-items: center;
  gap: 5px;
  margin-top: 11px;
`;

const Choices = styled.div`
  display: flex;
  gap: 10px;
  margin-top: 11px;
`;

const Choice = styled.label`
  display: flex;
  gap: 12px;
  line-height: 23px;
`;

const Radio = styled.input`
  appearance: none;
  width: 19px;
  height: 19px;
  margin: 0;
  border: 2px solid #666;
  border-radius: 50%;
  background: #fff;
`;

const WarningIcon = () => (
  <Glyph width="16" height="14" viewBox="0 0 16 14" aria-hidden="true">
    <path d="M8 0q.6 0 1 .7l6.800 11.800q.5 1.500-.8 1.500H1Q-.3 14 .2 12.500L7 .7Q7.400 0 8 0z" fill="#ffc629" />
    <path d="M7 4h2l-.3 5H7.300zM7.100 10.200h1.800V12H7.100z" fill="#222" />
  </Glyph>
);

const ContactBand = styled.section`
  margin-top: 59px;
  padding: 38px 0 57px;
  background: ${PINK};
  color: ${NAVY};
`;

const ContactLine = styled.div`
  display: flex;
  flex-wrap: wrap;
  column-gap: 18px;
  margin-top: 24px;
  font-weight: 700;
`;

const Bar = styled.span`
  font-weight: 400;
`;

/* ---------- footer ---------- */

const Footer = styled.footer`
  padding: 29px 0 32px;
  background: ${NAVY};
  color: #fff;
`;

const FooterGrid = styled.div`
  display: grid;
  grid-template-columns: 3fr 1fr;
`;

const Languages = styled.div`
  display: flex;
  flex-wrap: wrap;
  column-gap: 16px;
  margin-top: 8px;
  padding-right: 30px;
`;

const FooterLink = styled.a`
  color: #fff;
  text-decoration: none;
  font-size: ${(p) => (p.$compact ? 12 : 14)}px;
`;

const Social = styled.div`
  display: flex;
  column-gap: 28px;
  margin-top: 9px;
  a { color: #fff; }
  svg { display: block; }
`;

const LegalLinks = styled.nav`
  display: flex;
  flex-wrap: wrap;
  margin-top: 42px;
`;

const LegalItem = styled.span`
  & + &::before { content: "|"; margin: 0 20px 0 14px; }
`;

const Copyright = styled.p`
  margin-top: 43px;
  font-size: 12px;
  line-height: 18px;
  span { color: #8b8b94; }
`;

const LANGUAGES = ["አማርኛ", "العربية", "简体中文", "Српском", "Deutsch", "Español", "Français", "Italiano", "Kiswahili", "Tiếng Việt", "Ελληνικά", "دري", "فارسی", "नेपाली", "हिन्दी", "日本語", "한국어"];
const LEGAL = ["Copyright", "Disclaimer", "Privacy", "Right to information", "Site map"];

const SiteFooter = () => (
  <Footer>
    <Container>
      <FooterGrid>
        <section>
          <Heading $size={19} $line={24} $color="#fff">Information in your language</Heading>
          <Languages>
            {LANGUAGES.map((name) => (
              <FooterLink href="#language" key={name} $compact={/[\u0600-\u06ff\u1200-\u137f]/.test(name)}>{name}</FooterLink>
            ))}
          </Languages>
        </section>
        <section>
          <Heading $size={19} $line={24} $color="#fff">Connect with us</Heading>
          <Social>
            <a href="#facebook" aria-label="Facebook">
              <Glyph width="32" height="33" viewBox="0 0 32 33">
                <path fillRule="evenodd" d="M2 0h28q2 0 2 2v29q0 2-2 2h-8V20.500h4.300l.7-5h-5v-3.200q0-2.500 2.500-2.500H27V5.200q-1.500-.2-3.800-.2-6.200 0-6.200 6.500v4h-4.500v5H17V33H2q-2 0-2-2V2q0-2 2-2z" />
              </Glyph>
            </a>
            <a href="#x" aria-label="X">
              <Glyph width="33" height="33" viewBox="0 0 33 33">
                <path d="M1 1H9.800L32 32H23.200z" fill="none" stroke="#fff" strokeWidth="2" />
                <path d="M28.500 0h2.600L19 14.200l-1.400-1.900zM2 33h2.700L15 20.900 13.500 19z" />
              </Glyph>
            </a>
            <a href="#instagram" aria-label="Instagram">
              <Glyph width="33" height="33" viewBox="0 0 33 33">
                <rect x="1.500" y="1.500" width="30" height="30" rx="8" fill="none" stroke="#fff" strokeWidth="3" />
                <circle cx="16.500" cy="16.500" r="7" fill="none" stroke="#fff" strokeWidth="3" />
                <circle cx="25" cy="8" r="2" />
              </Glyph>
            </a>
            <a href="#email" aria-label="Email">
              <Glyph width="30" height="33" viewBox="0 0 30 33">
                <path d="M15 0L29 12V14L15 26 1 14V12zM0 14.500L10 23.500 0 31.500zM30 14.500V31.500L20 23.500zM11.500 24.500L15 27.500 18.500 24.500 29 33H1z" />
                <g fill="none" stroke={NAVY} strokeWidth="1.200">
                  <circle cx="15" cy="13" r="2.200" />
                  <path d="M17.200 10.500v3.500q.3 1.500 1.800.8 1.500-1.500.7-4-1.300-3.300-4.900-3.300-5 .3-5.200 5.500.2 5.300 5.400 5.500 1.800 0 3-.7" />
                </g>
              </Glyph>
            </a>
          </Social>
        </section>
      </FooterGrid>
      <LegalLinks aria-label="Legal">
        {LEGAL.map((name) => (
          <LegalItem key={name}><FooterLink href="#legal">{name}</FooterLink></LegalItem>
        ))}
      </LegalLinks>
      <Copyright>© State of Queensland 2025 <span>v. 6.11.16350</span></Copyright>
    </Container>
  </Footer>
);

export default function App() {
  return (
    <>
      <GlobalStyle />
      <SiteHeader />
      <Container as="main">
        <Alert>
          <div>
            <AlertTitle>January extended track closures - impacts all lines</AlertTitle>
            <p>View our <Link href="#notice">service notice</Link> for more information.</p>
          </div>
          <CloseButton type="button" aria-label="Close">×</CloseButton>
        </Alert>
        <Crumbs aria-label="Breadcrumb">
          <Link href="#home">Home</Link>
          <span>/</span>
          <Link href="#updates">Service updates</Link>
          <span>/</span>
          <span>University Drive, Meadowbrook - temporary stop closures</span>
        </Crumbs>
        <TitleRow>
          <Heading as="h1" $size={36} $line={43}>University Drive, Meadowbrook - temporary stop closures</Heading>
          <OutlineButton type="button" $small>Print <PrintIcon /></OutlineButton>
        </TitleRow>
        <Reviewed><strong>Last reviewed:</strong> Thursday 2 Jan 2025 at 12.01pm</Reviewed>
        <Paragraph>
          From <strong>6:30am until 6:30pm on Thursday 16, Friday 17 and Tuesday 21 January</strong> on the days below, the following stops will be closed due to roadworks.
        </Paragraph>
        <StopList>
          <li><Link href="#310768">University Dr at Griffith University Logan</Link> <Link href="#310768">(Stop ID 310768)</Link></li>
          <li><Link href="#310769">University Dr at Griffith Uni Logan Campus</Link> <Link href="#310769">(Stop ID 310769)</Link></li>
          <li><Link href="#310770">University Dr at Griffith Uni Logan Campus</Link> <Link href="#310770">(Stop ID 310770)</Link></li>
        </StopList>
        <Paragraph>
          If you normally catch <strong>route <Link href="#560">560</Link></strong> from here, please use the alternative shown below.
        </Paragraph>
        <Legend type="button" aria-expanded="false">Map legend<PlusIcon /></Legend>
        <ClosureMap />
        <Heading $size={23} $line={26} $top={20}>Affected services</Heading>
        <Heading as="h3" $size={21} $line={24} $top={28}>South East Queensland</Heading>
        <Heading as="h4" $size={18} $line={20} $top={19}>Bus</Heading>
        <Service><WarningIcon /><Link href="#560">560</Link></Service>
        <Heading $size={26} $line={30} $top={46}>Was this page helpful?</Heading>
        <Choices>
          <Choice><Radio type="radio" name="helpful" />Yes</Choice>
          <Choice><Radio type="radio" name="helpful" />No</Choice>
        </Choices>
        <OutlineButton type="button">Send feedback</OutlineButton>
      </Container>
      <ContactBand>
        <Container>
          <Heading $size={21} $line={24}>Get in touch</Heading>
          <Paragraph>We are available to answer your questions and help you with travelling on public transport across Queensland.</Paragraph>
          <ContactLine>
            <span>Call us on <Link href="#call">13 12 30</Link>, 24 hours a day</span>
            <Bar>|</Bar>
            <Link href="#feedback">Feedback form</Link>
            <Bar>|</Bar>
            <Link href="#options">More options</Link>
          </ContactLine>
        </Container>
      </ContactBand>
      <SiteFooter />
    </>
  );
}
